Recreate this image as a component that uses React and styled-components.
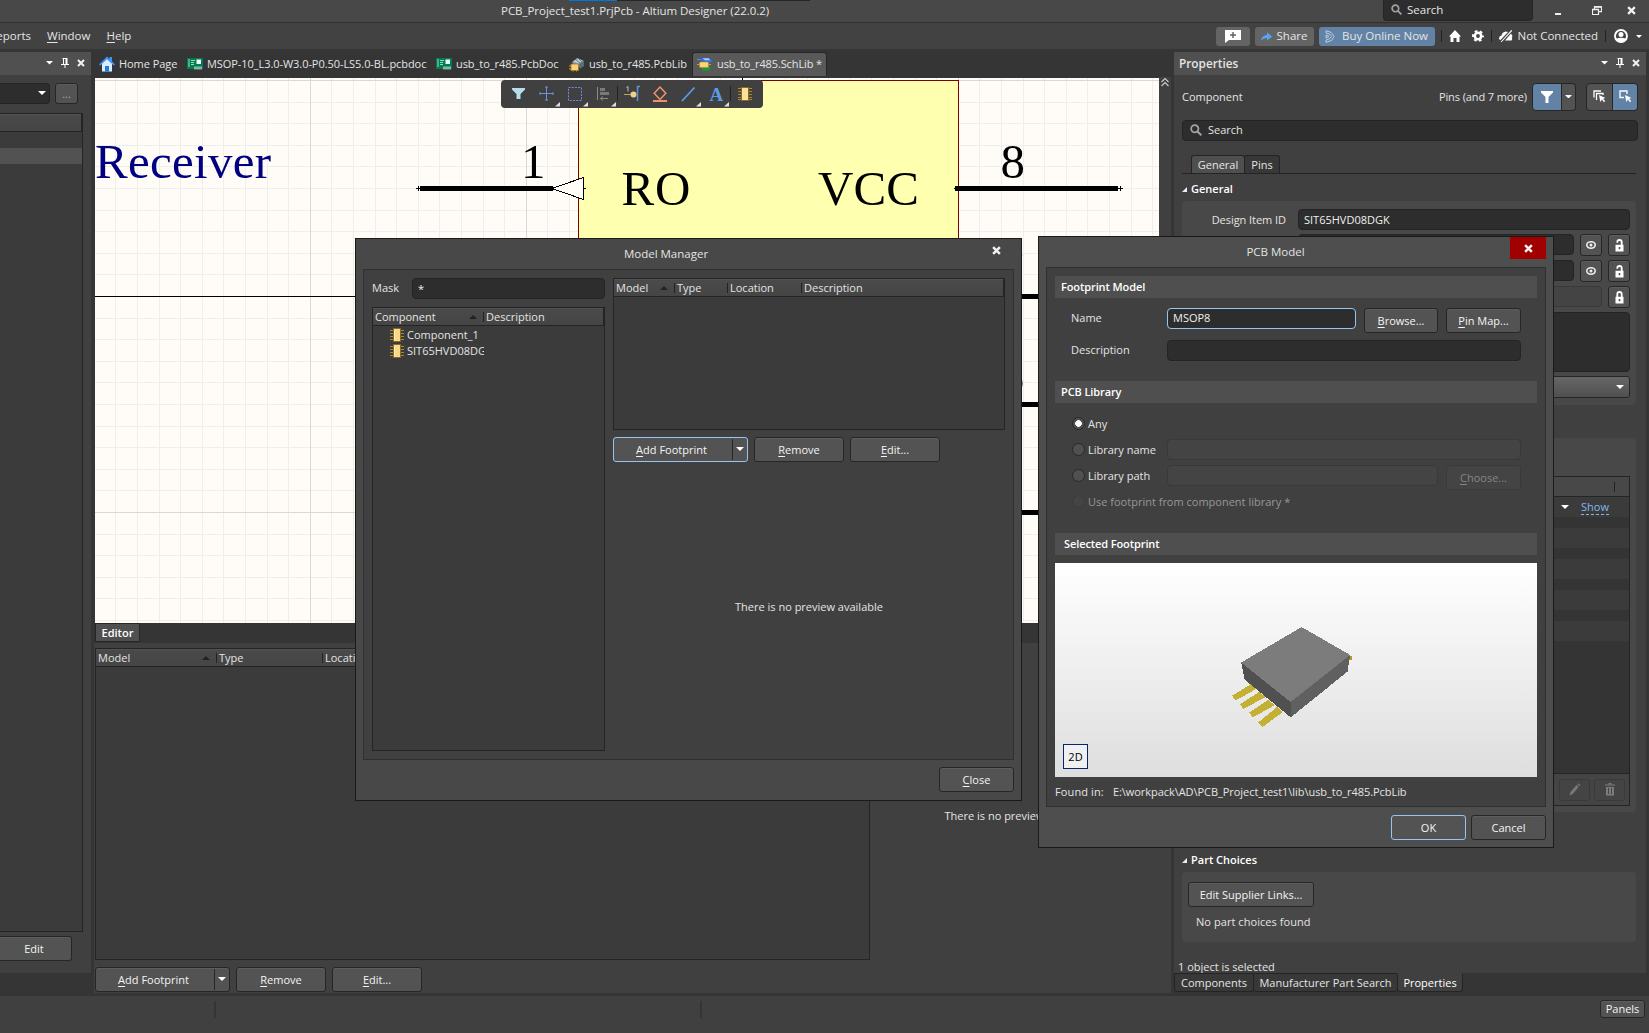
import React from 'react';
import styled, { createGlobalStyle, css } from 'styled-components';

const Global = createGlobalStyle`
  *, *::before, *::after { box-sizing: border-box; }
  body { margin: 0; background: #353535; }
  u { text-underline-offset: 2px; text-decoration-thickness: 1px; }
  svg { flex: none; }
`;

/* ---------- shell ---------- */
const Shell = styled.div`
  position: relative;
  width: 1649px;
  height: 1033px;
  overflow: hidden;
  display: flex;
  flex-direction: column;
  background: #353535;
  color: #e4e4e4;
  font: 11px/16px "Open Sans", "Noto Sans", sans-serif;
  white-space: nowrap;
  cursor: default;
`;
const TitleBar = styled.header`
  position: relative;
  height: 23px;
  flex: none;
  display: flex;
  align-items: flex-start;
  padding-left: 501px;
  background: #484848;
  border-bottom: 1px solid #303030;
`;
const TopEdge = styled.div`
  position: absolute;
  top: 0;
  left: 569px;
  width: 241px;
  height: 1px;
  background: linear-gradient(90deg, #0078d7 48px, #262626 48px);
`;
const AppTitle = styled.div`
  font-size: 11.5px;
  line-height: 22px;
  letter-spacing: -0.04px;
`;
const TitleSearch = styled.div`
  width: 150px;
  height: 21px;
  margin-left: auto;
  display: flex;
  align-items: center;
  gap: 5px;
  padding: 0 7px 1px;
  background: #2d2d2d;
  border: 1px solid #242424;
  border-top: 0;
  border-radius: 0 0 4px 4px;
  font-size: 11.5px;
`;
const WindowButtons = styled.div`
  display: flex;
  justify-content: space-between;
  align-items: center;
  width: 86px;
  height: 21px;
  margin: 0 13px 0 17px;
`;
const MenuBar = styled.nav`
  height: 26px;
  flex: none;
  display: flex;
  align-items: center;
  background: #424242;
  font-size: 11.5px;
`;
const MenuItem = styled.span`
  margin-left: ${(p) => p.$l}px;
`;
const CutItem = styled.span`
  width: 31px;
  display: flex;
  justify-content: flex-end;
`;
const MenuRight = styled.div`
  margin-left: auto;
  display: flex;
  align-items: center;
  height: 26px;
  padding-right: 7px;
`;
const Pill = styled.div`
  width: ${(p) => p.$w}px;
  height: 19px;
  margin-right: 5px;
  display: flex;
  align-items: center;
  justify-content: center;
  gap: ${(p) => p.$gap || 5}px;
  border-radius: 3px;
  background: ${(p) => (p.$blue ? '#6283a6' : '#646464')};
`;
const BarRule = styled.i`
  width: 1px;
  height: 12px;
  margin: 0 ${(p) => p.$r}px 0 ${(p) => p.$l}px;
  background: #222;
`;
const IconPair = styled.div`
  display: flex;
  align-items: center;
  gap: ${(p) => p.$gap}px;
`;
const Workspace = styled.main`
  height: 947px;
  flex: none;
  display: flex;
`;
const StatusBar = styled.footer`
  flex: 1;
  display: flex;
  align-items: flex-start;
  padding: 4px 4px 0 214px;
  background: #404040;
`;
const StatusRule = styled.i`
  width: 2px;
  height: 17px;
  margin: 1px ${(p) => p.$r}px 0 0;
  background: #353535;
`;

/* ---------- shared controls ---------- */
const Button = styled.div`
  width: ${(p) => p.$w}px;
  height: ${(p) => p.$h || 25}px;
  flex: none;
  display: flex;
  align-items: center;
  justify-content: center;
  color: #f4f4f4;
  background: #535353;
  border: 1px solid #262626;
  border-radius: 3px;
  box-shadow: inset 0 1px #5d5d5d;
  ${(p) => p.$focus && css`
    border-color: #97c5f0;
    box-shadow: none;
  `}
  ${(p) => p.$off && css`
    color: #858585;
    background: #444;
    border-color: #3a3a3a;
    box-shadow: none;
  `}
`;
const SplitMain = styled.span`
  flex: 1;
  text-align: center;
  padding-right: 3px;
`;
const SplitDrop = styled.span`
  width: 15px;
  height: 21px;
  display: flex;
  align-items: center;
  justify-content: center;
  padding-bottom: 2px;
  border-left: 1px solid #262626;
`;
const ButtonRow = styled.div`
  display: flex;
  gap: 6px;
`;
const Field = styled.div`
  width: ${(p) => (p.$w ? `${p.$w}px` : 'auto')};
  flex: ${(p) => (p.$w ? 'none' : 1)};
  height: ${(p) => p.$h || 21}px;
  padding: 0 5px;
  line-height: 19px;
  background: #2d2d2d;
  color: #f0f0f0;
  border: 1px solid #242424;
  border-radius: 4px;
  ${(p) => p.$focus && css`border-color: #97c5f0; line-height: 17px;`}
  ${(p) => p.$off && css`background: #444; border-color: #393939;`}
`;
const PanelHeader = styled.div`
  height: 23px;
  flex: none;
  display: flex;
  align-items: center;
  gap: 8px;
  padding: 0 6px 1px 5px;
  background: #505050;
`;
const PanelTitle = styled.div`
  flex: 1;
  font-size: 11.8px;
  font-weight: 600;
`;
const Table = styled.div`
  width: ${(p) => (p.$w ? `${p.$w}px` : 'auto')};
  height: ${(p) => (p.$h ? `${p.$h}px` : 'auto')};
  flex: ${(p) => (p.$h ? 'none' : 1)};
  display: flex;
  flex-direction: column;
  background: #3b3b3b;
  border: 1px solid #242424;
`;
const TableHead = styled.div`
  height: ${(p) => p.$h || 18}px;
  flex: none;
  display: flex;
  align-items: center;
  background: linear-gradient(#525252 1px, #4a4a4a 1px, #454545);
  border-right: 1px solid #242424;
  border-bottom: 1px solid #242424;
`;
const HeadCell = styled.div`
  width: ${(p) => p.$w}px;
  flex: none;
  display: flex;
  align-items: center;
  justify-content: space-between;
  padding: 0 6px 0 2px;
`;
const HeadRule = styled.i`
  width: 1px;
  height: 10px;
  flex: none;
  background: #222;
`;

/* ---------- left panel ---------- */
const SidePanel = styled.aside`
  width: 91px;
  height: 921px;
  margin: 3px 3px 0 0;
  flex: none;
  display: flex;
  flex-direction: column;
  background: #404040;
`;
const SideTools = styled.div`
  display: flex;
  gap: 5px;
  margin: 8px 0 9px;
`;
const SideCombo = styled.div`
  width: 50px;
  height: 21px;
  display: flex;
  align-items: center;
  justify-content: flex-end;
  padding: 0 3px 2px 0;
  background: #2d2d2d;
  border: 1px solid #242424;
  border-left: 0;
  border-radius: 0 4px 4px 0;
`;
const SideMore = styled(Button)`
  color: #a8a8a8;
`;
const SideList = styled(Table)`
  width: 83px;
  border-left: 0;
`;
const SideSelected = styled.div`
  height: 16px;
  margin-top: 16px;
  background: #525252;
`;
const SideEdit = styled(Button)`
  margin: 4px 0 12px;
  padding-right: 3px;
  border-left: 0;
  border-radius: 0 3px 3px 0;
`;

/* ---------- document area ---------- */
const DocArea = styled.section`
  width: 1077px;
  flex: none;
  display: flex;
  flex-direction: column;
`;
const TabStrip = styled.div`
  height: 29px;
  flex: none;
  display: flex;
  padding: 3px 0 2px;
`;
const DocTab = styled.div`
  width: ${(p) => p.$w}px;
  display: flex;
  align-items: center;
  gap: 4px;
  padding: 0 0 1px 4px;
  letter-spacing: -0.06px;
  border: 1px solid transparent;
  border-bottom: 0;
  ${(p) => p.$active && css`
    letter-spacing: -0.12px;
    background: #595959;
    border-color: #262626;
    border-radius: 3px 3px 0 0;
  `}
`;
const EditorRow = styled.div`
  position: relative;
  height: 545px;
  flex: none;
  display: flex;
  padding-left: 1px;
`;
const ScrollStrip = styled.div`
  flex: 1;
  margin-top: -1px;
  background: #404040;
`;
const ActiveBar = styled.div`
  position: absolute;
  left: 407px;
  top: 2px;
  width: 262px;
  height: 28px;
  border-radius: 4px;
  background: #404040;
`;
const EditorTabs = styled.div`
  height: 20px;
  flex: none;
  padding-left: 1px;
`;
const EditorTab = styled.div`
  width: 45px;
  height: 19px;
  line-height: 17px;
  text-align: center;
  font-weight: 600;
  color: #fff;
  background: #4f4f4f;
  border: 1px solid #262626;
`;
const EditorPane = styled.div`
  flex: none;
  height: 350px;
  padding: 5px 0 0 1px;
  background: #404040;
`;
const PaneSplit = styled.div`
  display: flex;
  height: 312px;
  margin-bottom: 7px;
`;
const PaneNote = styled.div`
  flex: 1;
  padding: 160px 4px 0 0;
  text-align: center;
`;

/* ---------- properties ---------- */
const PropsDock = styled.aside`
  width: 472px;
  margin: 3px 0 0 3px;
  flex: none;
  display: flex;
  flex-direction: column;
`;
const PropsBody = styled.div`
  height: 898px;
  flex: none;
  display: flex;
  flex-direction: column;
  padding: 8px 10px 0 8px;
  background: #404040;
`;
const PropsTop = styled.div`
  display: flex;
  height: 28px;
  align-items: center;
  margin-right: -2px;
`;
const PropsScope = styled.div`
  margin-left: auto;
  margin-right: 5px;
  letter-spacing: -0.1px;
`;
const ToolCell = styled.div`
  width: ${(p) => p.$w}px;
  height: 28px;
  display: flex;
  align-items: center;
  justify-content: center;
  margin-right: ${(p) => p.$gap || 0}px;
  padding-bottom: 1px;
  border: 1px solid #262626;
  background: ${(p) => (p.$blue ? '#6283a6' : '#535353')};
  border-radius: ${(p) => (p.$side === 'l' ? '4px 0 0 4px' : '0 4px 4px 0')};
  ${(p) => p.$side === 'r' && css`border-left: 0;`}
`;
const PropsSearch = styled.div`
  height: 21px;
  margin: 9px -2px 14px 0;
  display: flex;
  align-items: center;
  gap: 6px;
  padding: 0 0 1px 7px;
  background: #2d2d2d;
  border: 1px solid #242424;
  border-radius: 4px;
`;
const PropsTabs = styled.div`
  display: flex;
  height: 19px;
  padding-left: 9px;
  border-bottom: 1px solid #242424;
`;
const PropsTab = styled.div`
  width: ${(p) => p.$w}px;
  margin-right: -1px;
  line-height: 18px;
  text-align: center;
  background: ${(p) => (p.$active ? '#4f4f4f' : '#383838')};
  border: 1px solid #242424;
  border-bottom: 0;
  border-radius: 3px 3px 0 0;
`;
const Heading = styled.div`
  height: ${(p) => p.$h}px;
  margin-top: ${(p) => p.$top || 0}px;
  display: flex;
  align-items: center;
  gap: 4px;
  padding-top: ${(p) => p.$drop || 0}px;
  font-weight: 600;
  color: #fff;
`;
const Group = styled.div`
  height: ${(p) => p.$h}px;
  flex: none;
  display: flex;
  flex-direction: column;
  gap: 4px;
  padding: ${(p) => p.$top}px 6px 6px;
  background: #484848;
  border-radius: 4px;
`;
const PropRow = styled.div`
  display: flex;
  gap: 6px;
  height: ${(p) => p.$h || 22}px;
`;
const PropLabel = styled.div`
  width: 104px;
  padding-right: 6px;
  line-height: 21px;
  text-align: right;
  letter-spacing: -0.05px;
`;
const TypeCombo = styled.div`
  width: 332px;
  height: 22px;
  margin-left: auto;
  display: flex;
  align-items: center;
  justify-content: flex-end;
  padding-right: 5px;
  border: 1px solid #262626;
  border-radius: 3px;
  background: linear-gradient(#666, #505050);
`;
const ModelsTable = styled.div`
  height: 330px;
  display: flex;
  flex-direction: column;
  border: 1px solid #242424;
  background: #343434;
`;
const ModelsHead = styled.div`
  height: 20px;
  display: flex;
  align-items: center;
  justify-content: flex-end;
  padding-right: 14px;
  background: #484848;
  border-bottom: 1px solid #242424;
`;
const ModelsRow = styled.div`
  height: ${(p) => p.$h}px;
  flex: none;
  display: flex;
  align-items: center;
  justify-content: flex-end;
  background: ${(p) => (p.$light ? '#3b3b3b' : '#343434')};
`;
const ShowLink = styled.a`
  margin: 0 20px 0 12px;
  line-height: 14px;
  color: #80b6ee;
  border-bottom: 1px dashed #80b6ee;
`;
const ModelsFoot = styled.div`
  height: 32px;
  margin-top: auto;
  display: flex;
  align-items: center;
  justify-content: flex-end;
  gap: 4px;
  padding-right: 4px;
  background: #444;
  border-top: 1px solid #242424;
`;
const SupplierBox = styled.div`
  display: flex;
  flex-direction: column;
  gap: 7px;
`;
const SupplierNote = styled.div`
  padding-left: 8px;
  letter-spacing: 0.06px;
`;
const SelectionNote = styled.div`
  margin: auto 0 -2px -4px;
`;
const DockTabs = styled.div`
  display: flex;
  height: 19px;
`;
const DockTab = styled.div`
  width: ${(p) => p.$w}px;
  margin-right: -1px;
  line-height: 17px;
  text-align: center;
  background: ${(p) => (p.$active ? '#404040' : '#383838')};
  color: ${(p) => (p.$active ? '#fff' : '#e4e4e4')};
  border: 1px solid #242424;
  ${(p) => p.$active && css`border-top-color: #404040;`}
  border-radius: 0 0 3px 3px;
`;
const PanelsButton = styled(Button)`
  margin-left: auto;
`;

/* ---------- dialogs ---------- */
const Dialog = styled.div`
  position: absolute;
  left: ${(p) => p.$x}px;
  top: ${(p) => p.$y}px;
  width: ${(p) => p.$w}px;
  height: ${(p) => p.$h}px;
  display: flex;
  flex-direction: column;
  padding: 0 7px;
  background: ${(p) => p.$bg};
  border: 1px solid #1a1a1a;
`;
const DialogBar = styled.div`
  height: 30px;
  flex: none;
  display: flex;
  align-items: flex-start;
`;
const DialogTitle = styled.div`
  flex: 1;
  text-align: center;
  font-size: 11.5px;
  line-height: 29px;
  padding-right: ${(p) => p.$pad}px;
`;
const DialogClose = styled.div`
  width: 36px;
  height: 22px;
  display: flex;
  align-items: center;
  justify-content: center;
  background: ${(p) => (p.$red ? '#a00000' : 'transparent')};
`;
const Frame = styled.div`
  height: ${(p) => p.$h}px;
  flex: none;
  display: flex;
  flex-direction: ${(p) => p.$dir || 'row'};
  gap: ${(p) => p.$gap || 0}px;
  padding: 8px;
  background: #404040;
  border: 1px solid #303030;
`;
const DialogFoot = styled.div`
  display: flex;
  justify-content: flex-end;
  gap: 5px;
  padding-top: ${(p) => p.$top}px;
`;
const LeftColumn = styled.div`
  width: 233px;
  display: flex;
  flex-direction: column;
  gap: 8px;
`;
const RightColumn = styled.div`
  flex: 1;
  display: flex;
  flex-direction: column;
  gap: 7px;
`;
const MaskRow = styled.label`
  display: flex;
  line-height: 20px;
`;
const MaskLabel = styled.span`
  width: 40px;
`;
const ListItem = styled.div`
  width: 111px;
  height: 16px;
  display: flex;
  align-items: center;
  gap: 3px;
  padding-left: 17px;
  overflow: hidden;
`;
const ListBody = styled.div`
  padding-top: 1px;
`;
const Preview = styled.div`
  flex: 1;
  display: flex;
  align-items: center;
  justify-content: center;
  padding-bottom: 6px;
`;
const Section = styled.div`
  height: 22px;
  flex: none;
  padding-left: ${(p) => p.$pad || 6}px;
  line-height: 21px;
  font-weight: 600;
  letter-spacing: -0.1px;
  color: #fff;
  background: #4f4f4f;
`;
const Form = styled.div`
  display: flex;
  flex-direction: column;
  gap: ${(p) => p.$gap}px;
  height: ${(p) => p.$h}px;
  flex: none;
  padding: 10px 16px 0;
`;
const FormRow = styled.div`
  height: ${(p) => p.$h || 21}px;
  flex: none;
  display: flex;
  gap: 8px;
  color: ${(p) => (p.$off ? '#979797' : '#e4e4e4')};
`;
const FormLabel = styled.div`
  width: 96px;
  height: ${(p) => p.$h || 21}px;
  margin-right: -8px;
  flex: none;
  display: flex;
  align-items: center;
  gap: 3px;
`;
const Radio = styled.i`
  width: 13px;
  height: 13px;
  margin-left: 1px;
  flex: none;
  border-radius: 50%;
  border: 1px solid ${(p) => (p.$off ? '#3c3c3c' : '#282828')};
  background: ${(p) => (p.$on ? 'radial-gradient(circle, #fff 3px, #505050 3.6px)' : p.$off ? '#444' : '#505050')};
`;
const Scene = styled.div`
  position: relative;
  height: 214px;
  flex: none;
  margin: 8px 0 7px;
  background: linear-gradient(#fff, #dedede);
`;
const ModeButton = styled.div`
  position: absolute;
  left: 8px;
  bottom: 8px;
  width: 25px;
  height: 25px;
  line-height: 24px;
  text-align: center;
  color: #000;
  background: #f0f0f0;
  border: 1px solid #0a246a;
`;
const FoundRow = styled.div`
  display: flex;
  gap: 9px;
`;
const FoundLabel = styled.span`
  letter-spacing: 0.12px;
`;
const FoundPath = styled.span`
  letter-spacing: -0.05px;
`;

/* ---------- icons ---------- */
const Caret = ({ w = 8, c = '#fff' }) => (
  <svg width={w} height={w / 2} viewBox="0 0 8 4"><path d="M0 0h8L4 4z" fill={c} /></svg>
);
const SortUp = () => <svg width="8" height="4" viewBox="0 0 8 4"><path d="M4 0l4 4H0z" fill="#222" /></svg>;
const Cross = ({ s = 8, t = 2 }) => (
  <svg width={s} height={s} viewBox="0 0 8 8"><path d="M1 1l6 6M7 1L1 7" stroke="#f2f2f2" strokeWidth={t} /></svg>
);
const Pin = () => (
  <svg width="8" height="10" viewBox="0 0 8 10"><path d="M1.5.5h5M2.5 0v6M5.5 0v6M0 6.5h8M4 6v4" stroke="#fff" fill="none" /><path d="M4.5 1h2v5h-2z" fill="#fff" /></svg>
);
const Magnifier = ({ s = 12 }) => (
  <svg width={s} height={s} viewBox="0 0 12 12"><circle cx="4.8" cy="4.8" r="3.6" fill="none" stroke="#a2a2a2" strokeWidth="1.8" /><path d="M7.5 7.5l3.8 3.8" stroke="#a2a2a2" strokeWidth="2" /></svg>
);
const HomeTabIcon = () => (
  <svg width="16" height="16" viewBox="0 0 16 16"><path d="M3 7v8.5h10V7L8 2z" fill="#dfeaf8" /><path d="M6 15.5V10h4v5.5z" fill="#1e7de0" /><path d="M0 8.5L8 .5l2.5 2.4V1H13v4.3l3 3.2-1.3 1L8 3.2 1.3 9.5z" fill="#3b95f2" /></svg>
);
const BoardIcon = () => (
  <svg width="16" height="13" viewBox="0 0 16 13"><rect width="16" height="11" fill="#067a52" /><path d="M1 2h2M1 4h2M1 6h2M1 8h2M4 2.500h4M4 4.500h3M4 6.500h3" stroke="#8fe0bd" /><rect x="9.500" y="1.500" width="4.500" height="4.500" fill="#eafff4" /><path d="M8 8.500v3M10 8.500v3M12 8.500v3M14 8.500v3" stroke="#eafff4" /></svg>
);
const PcbLibIcon = () => (
  <svg width="16" height="15" viewBox="0 0 16 15"><path d="M3 5l5-4 7 3-4 6H6z" fill="#7f97a5" /><path d="M4 4.5l5-3 5 2.200-4.500 3z" fill="#b9cdd8" /><path d="M10 7l5-3v5l-4 3z" fill="#566d7a" /><path d="M6 2l5 4M9 1l4 4" stroke="#52636d" strokeWidth=".8" /><rect x="2" y="7" width="7.500" height="6.500" fill="#f7d27c" stroke="#a5731a" strokeWidth=".8" /><path d="M0 9h2M0 12h2M4 14.500v-1M7.500 14.500v-1" stroke="#c99a3f" /></svg>
);
const SchLibIcon = () => (
  <svg width="16" height="15" viewBox="0 0 16 15"><path d="M4 1h8l3.500 3-1.500 1.500H5z" fill="#2f6fe0" /><path d="M5.500 1.300h6l2 2H8z" fill="#a8cbff" /><path d="M0 2.500h4" stroke="#4a8af0" /><ellipse cx="9" cy="11" rx="4.500" ry="2.600" fill="#1f9a3a" /><path d="M5 13.800h8" stroke="#1c8a30" strokeDasharray="1 1" /><rect x="2.500" y="5" width="9" height="5.500" rx="1.200" fill="#fbd679" stroke="#b98424" strokeWidth=".6" /><path d="M0 7.500h2.500M11.500 7.500H14" stroke="#c99a3f" /></svg>
);
const ChipIcon = () => (
  <svg width="14" height="14" viewBox="0 0 14 14"><path d="M0 2.500h14M0 5.500h14M0 8.500h14M0 11.500h14" stroke="#a88636" /><rect x="3.500" y=".5" width="7" height="13" fill="#f8d98a" stroke="#8a6a20" /><path d="M4.500 1.500v11" stroke="#fdf0c4" /></svg>
);
const Eye = () => (
  <svg width="10" height="8" viewBox="0 0 10 8"><ellipse cx="5" cy="4" rx="4.200" ry="3.200" fill="none" stroke="#eee" strokeWidth="1.600" /><circle cx="5" cy="4" r="1.500" fill="#eee" /></svg>
);
const Lock = ({ open }) => (
  <svg width="9" height="13" viewBox="0 0 9 13"><path d={open ? 'M2.300 3.800V3a2.200 2 0 0 1 4.400 0v3' : 'M2.300 6V3a2.200 2 0 0 1 4.400 0v3'} fill="none" stroke="#fff" strokeWidth="1.800" /><path fillRule="evenodd" d="M.5 5.700h8v6.800h-8zM3.700 8v2.300h1.600V8z" fill="#fff" /></svg>
);
const Funnel = () => (
  <svg width="12" height="12" viewBox="0 0 12 12"><path d="M0 0h12v1.500L7.500 6v6h-3V6L0 1.500z" fill="#fff" /></svg>
);
const PickIcon = ({ multi }) => (
  <svg width="13" height="13" viewBox="0 0 13 13"><path d={multi ? 'M1 7.500V1h7M3.500 10V3.500h6.500V5' : 'M5 7.500H1V1h7v3'} fill="none" stroke="#fff" strokeWidth="1.300" /><path d="M6 5l6.500 3-2.300.7 2 2.600-1.300 1-1.900-2.700L7.300 12z" fill="#fff" /></svg>
);
const Triangle = () => <svg width="5" height="5" viewBox="0 0 5 5"><path d="M5 0v5H0z" fill="#eee" /></svg>;
const Pencil = () => <svg width="12" height="13" viewBox="0 0 12 13"><path d="M.5 12.500l1-3.500 6-7 2.200 2-6 7zM8.300 1.200l1-1 2 2-.9 1z" fill="#787878" /></svg>;
const Trash = () => <svg width="10" height="13" viewBox="0 0 10 13"><path d="M0 2h10M3.500.6h3" stroke="#7c7c7c" strokeWidth="1.200" /><path d="M1 4h8v8.500H1z" fill="#7c7c7c" /><path d="M3.500 5v6M6.500 5v6" stroke="#444" /></svg>;
const CommentIcon = () => <svg width="16" height="14" viewBox="0 0 16 14"><path d="M0 1h16v10H4l-4 3z" fill="#fff" /><path d="M8 3v6M5 6h6" stroke="#606060" strokeWidth="1.400" /></svg>;
const ShareIcon = () => <svg width="11" height="9" viewBox="0 0 11 9"><path d="M0 8.500Q.5 3.500 6 3V.3L11 4.700 6 8.600V6Q2.500 5.800 0 8.500z" fill="#54a6f5" /></svg>;
const HexIcon = () => <svg width="10" height="13" viewBox="0 0 10 13"><path d="M1 3V.8l5 1.500 3.200 4L6.500 10.500 1 12.300V10l4-1.500 1.500-2.300L5 4.300zM1 5l3 1.300L1 8z" fill="none" stroke="#c6d6e6" strokeWidth=".9" /></svg>;
const HouseIcon = () => <svg width="12" height="12" viewBox="0 0 12 12"><path d="M6 0l6 6.500h-1.500V12h-3V8h-3v4h-3V6.500H0z" fill="#fff" /></svg>;
const GearIcon = () => (
  <svg width="12" height="12" viewBox="0 0 12 12"><circle cx="6" cy="6" r="3.200" fill="none" stroke="#fff" strokeWidth="2.600" /><circle cx="6" cy="6" r="5" fill="none" stroke="#fff" strokeWidth="2" strokeDasharray="2.600 2.636" strokeDashoffset="1.300" /></svg>
);
const OfflineIcon = () => <svg width="14" height="12" viewBox="0 0 14 12"><path d="M0 8.500Q0 6 2.500 5.500 3 2 7 1.500L9 2 1.500 10Q0 9.500 0 8.500zM6 10.500l6-7Q14 5.500 12.800 7.500 14 9 12.500 10.500zM1.500 12L12.300 0l1 .8L2.700 12z" fill="#fff" /></svg>;
const UserIcon = () => (
  <svg width="14" height="14" viewBox="0 0 14 14"><circle cx="7" cy="7" r="6" fill="none" stroke="#fff" strokeWidth="1.900" /><circle cx="7" cy="5.400" r="2.500" fill="#fff" /><path d="M1.500 10Q7 7.500 12.500 10L10.500 12.500 7 13.500 3.500 12.500z" fill="#fff" /></svg>
);

/* ---------- schematic canvas ---------- */
const Sheet = styled.svg`
  display: block;
  flex: none;
  background: #fffcf7;
  shape-rendering: crispEdges;
  text { font-family: "Liberation Serif", "Times New Roman", serif; font-size: 49px; shape-rendering: auto; }
`;
const range = (n) => Array.from({ length: n }, (_, i) => i);

function Schematic() {
  const cols = range(50).map((i) => ({ x: Math.floor(94.3 + i * 21.6) + 0.5, major: i % 10 === 0 }));
  const rows = range(26).map((i) => ({ y: Math.round(80 + i * 21.6) + 0.5, major: i % 10 === 0 }));
  return (
    <Sheet width="1064" height="545" viewBox="95 78 1064 545">
      {cols.filter((c) => !c.major).map((c) => <path key={c.x} d={`M${c.x} 78V623`} stroke="#eeeeea" />)}
      {rows.filter((r) => !r.major).map((r) => <path key={r.y} d={`M95 ${r.y}H1159`} stroke="#eeeeea" />)}
      {cols.filter((c) => c.major).map((c) => <path key={c.x} d={`M${c.x} 78V623`} stroke="#d8d8d6" />)}
      {rows.filter((r) => r.major).map((r) => <path key={r.y} d={`M95 ${r.y}H1159`} stroke="#d8d8d6" />)}
      <path d="M95 296.500H1159M742.500 78V623" stroke="#000" />
      <rect x="578.500" y="80.500" width="380" height="470" fill="#ffffb0" stroke="#800000" />
      <path d="M420 188.500H553M955 188.500H1118M955 296.500H1118M955 404.500H1118M955 512.500H1118" stroke="#000" strokeWidth="5" />
      <path d="M416 188.500H421M418.500 186V191M1118 188.500H1123M1120.500 186V191M954 188.500h2M584 188.500h2" stroke="#000" strokeWidth="1.500" />
      <path d="M552 188.500L583.500 177.500V199.500z" fill="#fffcf7" stroke="#000" />
      <text x="95" y="178" fill="#000080" textLength="176">Receiver</text>
      <text x="521" y="178">1</text>
      <text x="621.500" y="205" textLength="69">RO</text>
      <text x="818" y="205" textLength="101">VCC</text>
      <text x="1000.500" y="178">8</text>
      <text x="999" y="286">7</text>
      <text x="999.500" y="394">6</text>
      <text x="999" y="502">5</text>
    </Sheet>
  );
}

function ActiveBarIcons() {
  return (
    <svg width="262" height="28" viewBox="501 80 262 28">
      <path d="M512 88h13v1.500l-4.500 4.500v5h-4v-5L512 89.500z" fill="#b5dcea" />
      <path d="M540 93.500h13M546.500 87v13M540 92v3M553 92v3M545 87h3M545 100h3" stroke="#6e8fe0" />
      <rect x="568.500" y="87.500" width="13" height="13" fill="none" stroke="#6e8fe0" strokeDasharray="2 1.250" />
      <path d="M597.500 87v13" stroke="#8a8a8a" /><path d="M600 88h5v3h-5zM600 92h9v3h-9z" fill="#7a7a7a" /><path d="M600 98.500h8M603 96.500l-2.500 2 2.500 2" stroke="#8a8a8a" fill="none" />
      <path d="M617.500 86v15M730.500 86v15" stroke="#222" />
      <path d="M624 94.500h8" stroke="#c9a25a" /><circle cx="633.500" cy="94.500" r="3" fill="#f2cf8b" /><path d="M640 86.500h-2.500V101" stroke="#5b8fd8" fill="none" strokeWidth="1.500" /><path d="M626.500 87.500l1.500-1v5" stroke="#bbb" fill="none" />
      <path d="M660 87l5.800 6.200L660 99.500l-5.800-6.300z" fill="none" stroke="#f0906c" strokeWidth="1.500" /><path d="M653 101h14" stroke="#f0906c" strokeWidth="2" />
      <path d="M682 101l12.500-13.500" stroke="#5a9ae6" strokeWidth="1.800" />
      <text x="709.500" y="101" fontFamily="Liberation Serif, serif" fontWeight="700" fontSize="19" fill="#5a9ae6">A</text>
      <path d="M738 88.500h14M738 91.500h14M738 94.500h14M738 97.500h14M738 99.500h14" stroke="#a88636" />
      <rect x="741.500" y="87.500" width="7" height="13" fill="#fbdf9a" stroke="#8a6a20" />
      <path d="M560 102v4.500h-5zM588 102v4.500h-5zM616 102v4.500h-5zM701 102v4.500h-5zM729 102v4.500h-5z" fill="#ddd" />
    </svg>
  );
}

function FootprintModel() {
  return (
    <svg width="482" height="214" viewBox="1055 563 482 214" shapeRendering="crispEdges">
      <path d="M1348 656l3.500.5v3l-3 .5z" fill="#b39a20" />
      <g fill="#c4b032">
        <path d="M1251 684l6 4.500-21.300 12-3.700-4.700z" />
        <path d="M1259 692l6.500 5-22 12-3.700-4.700z" />
        <path d="M1268 700l7 5-22 12.300-4-4.700z" />
        <path d="M1277 707l6 5-20.500 15-4.300-4.500z" />
      </g>
      <path d="M1241.200 662.500l3.400 17 46 37.800v-17z" fill="#505050" />
      <path d="M1290.600 700l59.600-46-2.600 17.500-57 46z" fill="#606060" />
      <path d="M1301.600 627l48.600 28-59.600 47-49.400-39.500z" fill="#7c7c7c" />
    </svg>
  );
}

const SplitButton = ({ focus }) => (
  <Button $w={135} $focus={focus}>
    <SplitMain><u>A</u>dd Footprint</SplitMain>
    <SplitDrop><Caret /></SplitDrop>
  </Button>
);
const ModelButtons = ({ focus }) => (
  <ButtonRow>
    <SplitButton focus={focus} />
    <Button $w={90}><span><u>R</u>emove</span></Button>
    <Button $w={90}><span><u>E</u>dit...</span></Button>
  </ButtonRow>
);
const ModelsHeader = ({ widths }) => (
  <TableHead>
    <HeadCell $w={widths[0]}>Model<SortUp /></HeadCell><HeadRule />
    <HeadCell $w={widths[1]}>Type</HeadCell><HeadRule />
    <HeadCell $w={widths[2]}>Location</HeadCell><HeadRule />
    <HeadCell $w={90}>Description</HeadCell>
  </TableHead>
);

function ModelManager() {
  return (
    <Dialog $x={355} $y={238} $w={667} $h={563} $bg="#484848">
      <DialogBar>
        <DialogTitle $pad={9}>Model Manager</DialogTitle>
        <DialogClose><Cross s={9} t={2.2} /></DialogClose>
      </DialogBar>
      <Frame $h={491} $gap={8}>
        <LeftColumn>
          <MaskRow><MaskLabel>Mask</MaskLabel><Field>*</Field></MaskRow>
          <Table>
            <TableHead>
              <HeadCell $w={110}>Component<SortUp /></HeadCell><HeadRule />
              <HeadCell $w={110}>Description</HeadCell>
            </TableHead>
            <ListBody>
              <ListItem><ChipIcon />Component_1</ListItem>
              <ListItem><ChipIcon />SIT65HVD08DGK</ListItem>
            </ListBody>
          </Table>
        </LeftColumn>
        <RightColumn>
          <Table $h={152}><ModelsHeader widths={[60, 52, 73]} /></Table>
          <ModelButtons focus />
          <Preview>There is no preview available</Preview>
        </RightColumn>
      </Frame>
      <DialogFoot $top={7}><Button $w={75}><u>C</u>lose</Button></DialogFoot>
    </Dialog>
  );
}

function PcbModel() {
  return (
    <Dialog $x={1038} $y={236} $w={516} $h={612} $bg="#4e4e4e">
      <DialogBar>
        <DialogTitle $pad={5}>PCB Model</DialogTitle>
        <DialogClose $red><Cross s={9} t={2.2} /></DialogClose>
      </DialogBar>
      <Frame $h={540} $dir="column">
        <Section>Footprint Model</Section>
        <Form $gap={7} $h={83}>
          <FormRow $h={25}>
            <FormLabel $h={19}>Name</FormLabel>
            <Field $w={189} $focus>MSOP8</Field>
            <Button $w={74}><u>B</u>rowse...</Button>
            <Button $w={75}><u>P</u>in Map...</Button>
          </FormRow>
          <FormRow><FormLabel $h={19}>Description</FormLabel><Field /></FormRow>
        </Form>
        <Section>PCB Library</Section>
        <Form $gap={5} $h={130}>
          <FormRow><FormLabel><Radio $on />Any</FormLabel></FormRow>
          <FormRow><FormLabel><Radio />Library name</FormLabel><Field $off /></FormRow>
          <FormRow><FormLabel><Radio />Library path</FormLabel><Field $off /><Button $w={75} $off><u>C</u>hoose...</Button></FormRow>
          <FormRow $off><FormLabel><Radio $off />Use footprint from component library *</FormLabel></FormRow>
        </Form>
        <Section $pad={9}>Selected Footprint</Section>
        <Scene><FootprintModel /><ModeButton>2D</ModeButton></Scene>
        <FoundRow><FoundLabel>Found in:</FoundLabel><FoundPath>E:\workpack\AD\PCB_Project_test1\lib\usb_to_r485.PcbLib</FoundPath></FoundRow>
      </Frame>
      <DialogFoot $top={8}><Button $w={75} $focus>OK</Button><Button $w={75}>Cancel</Button></DialogFoot>
    </Dialog>
  );
}

function Properties() {
  return (
    <PropsDock>
      <PanelHeader><PanelTitle>Properties</PanelTitle><Caret w={7} /><Pin /><Cross s={8} /></PanelHeader>
      <PropsBody>
        <PropsTop>
          <span>Component</span>
          <PropsScope>Pins (and 7 more)</PropsScope>
          <ToolCell $w={30} $blue $side="l"><Funnel /></ToolCell>
          <ToolCell $w={14} $side="r" $gap={10}><Caret w={7} /></ToolCell>
          <ToolCell $w={27} $side="l"><PickIcon multi /></ToolCell>
          <ToolCell $w={25} $blue $side="r"><PickIcon /></ToolCell>
        </PropsTop>
        <PropsSearch><Magnifier />Search</PropsSearch>
        <PropsTabs><PropsTab $w={54} $active>General</PropsTab><PropsTab $w={36}>Pins</PropsTab></PropsTabs>
        <Heading $h={27} $drop={3}><Triangle />General</Heading>
        <Group $h={204} $top={8}>
          <PropRow $h={21}><PropLabel>Design Item ID</PropLabel><Field>SIT65HVD08DGK</Field></PropRow>
          <PropRow><PropLabel /><Field /><Button $w={22} $h={22}><Eye /></Button><Button $w={22} $h={22}><Lock open /></Button></PropRow>
          <PropRow><PropLabel /><Field /><Button $w={22} $h={22}><Eye /></Button><Button $w={22} $h={22}><Lock open /></Button></PropRow>
          <PropRow><PropLabel /><Field $off /><Button $w={22} $h={22}><Lock /></Button></PropRow>
          <PropRow $h={60}><PropLabel /><Field $h={60} /></PropRow>
          <TypeCombo><Caret /></TypeCombo>
        </Group>
        <Heading $h={33} />
        <Group $h={374} $top={38}>
          <ModelsTable>
            <ModelsHead><HeadRule /></ModelsHead>
            <ModelsRow $h={20} $light><Caret /><ShowLink>Show</ShowLink></ModelsRow>
            {range(4).map((i) => (
              <React.Fragment key={i}><ModelsRow $h={10.5} /><ModelsRow $h={20.5} $light /></React.Fragment>
            ))}
            <ModelsFoot><Button $w={31} $h={22} $off><Pencil /></Button><Button $w={31} $h={22} $off><Trash /></Button></ModelsFoot>
          </ModelsTable>
        </Group>
        <Heading $h={25} $top={35} $drop={1}><Triangle />Part Choices</Heading>
        <Group $h={70} $top={10}>
          <SupplierBox>
            <Button $w={126}>Edit Supplier Links...</Button>
            <SupplierNote>No part choices found</SupplierNote>
          </SupplierBox>
        </Group>
        <SelectionNote>1 object is selected</SelectionNote>
      </PropsBody>
      <DockTabs>
        <DockTab $w={80}>Components</DockTab><DockTab $w={145}>Manufacturer Part Search</DockTab><DockTab $w={66} $active>Properties</DockTab>
      </DockTabs>
    </PropsDock>
  );
}

export default function App() {
  return (
    <Shell>
      <Global />
      <TitleBar>
        <TopEdge />
        <AppTitle>PCB_Project_test1.PrjPcb - Altium Designer (22.0.2)</AppTitle>
        <TitleSearch><Magnifier s={11} />Search</TitleSearch>
        <WindowButtons>
          <svg width="16" height="8" viewBox="0 0 16 8"><path d="M5 7h6" stroke="#eee" strokeWidth="2" /></svg>
          <svg width="10" height="9" viewBox="0 0 10 9"><path d="M.5 3.500h6v5h-6zM2.500 3V.7h7v5H7" fill="none" stroke="#eee" strokeWidth="1.200" /><path d="M0 3.500h7M2 1h8" stroke="#eee" strokeWidth="1.500" /></svg>
          <Cross s={9} />
        </WindowButtons>
      </TitleBar>
      <MenuBar>
        <CutItem>eports</CutItem>
        <MenuItem $l={16}><u>W</u>indow</MenuItem>
        <MenuItem $l={16}><u>H</u>elp</MenuItem>
        <MenuRight>
          <Pill $w={34}><CommentIcon /></Pill>
          <Pill $w={59}><ShareIcon />Share</Pill>
          <Pill $w={116} $gap={7} $blue><HexIcon />Buy Online Now</Pill>
          <BarRule $l={1} $r={7} />
          <IconPair $gap={11}><HouseIcon /><GearIcon /></IconPair>
          <BarRule $l={7} $r={7} />
          <IconPair $gap={5}><OfflineIcon />Not Connected</IconPair>
          <BarRule $l={7} $r={8} />
          <IconPair $gap={8}><UserIcon /><Caret w={6} /></IconPair>
        </MenuRight>
      </MenuBar>
      <Workspace>
        <SidePanel>
          <PanelHeader><PanelTitle /><Caret w={7} /><Pin /><Cross s={8} /></PanelHeader>
          <SideTools><SideCombo><Caret /></SideCombo><SideMore $w={23} $h={21}>...</SideMore></SideTools>
          <SideList><TableHead /><SideSelected /></SideList>
          <SideEdit $w={72} $h={25}>Edit</SideEdit>
        </SidePanel>
        <DocArea>
          <TabStrip>
            <DocTab $w={88}><HomeTabIcon />Home Page</DocTab>
            <DocTab $w={249}><BoardIcon />MSOP-10_L3.0-W3.0-P0.50-LS5.0-BL.pcbdoc</DocTab>
            <DocTab $w={133}><BoardIcon />usb_to_r485.PcbDoc</DocTab>
            <DocTab $w={128}><PcbLibIcon />usb_to_r485.PcbLib</DocTab>
            <DocTab $w={135} $active><SchLibIcon />usb_to_r485.SchLib *</DocTab>
          </TabStrip>
          <EditorRow>
            <Schematic />
            <ScrollStrip>
              <svg width="12" height="12" viewBox="0 0 12 12"><path d="M2.500 5L6 1.500 9.500 5M2.500 9L6 5.500 9.500 9" fill="none" stroke="#ccc" strokeWidth="1.100" /></svg>
            </ScrollStrip>
            <ActiveBar><ActiveBarIcons /></ActiveBar>
          </EditorRow>
          <EditorTabs><EditorTab>Editor</EditorTab></EditorTabs>
          <EditorPane>
            <PaneSplit>
              <Table $w={775} $h={312}><ModelsHeader widths={[120, 105, 140]} /></Table>
              <PaneNote>There is no preview available</PaneNote>
            </PaneSplit>
            <ModelButtons />
          </EditorPane>
        </DocArea>
        <Properties />
      </Workspace>
      <StatusBar>
        <StatusRule $r={484} /><StatusRule $r={0} />
        <PanelsButton $w={45} $h={18}>Panels</PanelsButton>
      </StatusBar>
      <ModelManager />
      <PcbModel />
    </Shell>
  );
}
